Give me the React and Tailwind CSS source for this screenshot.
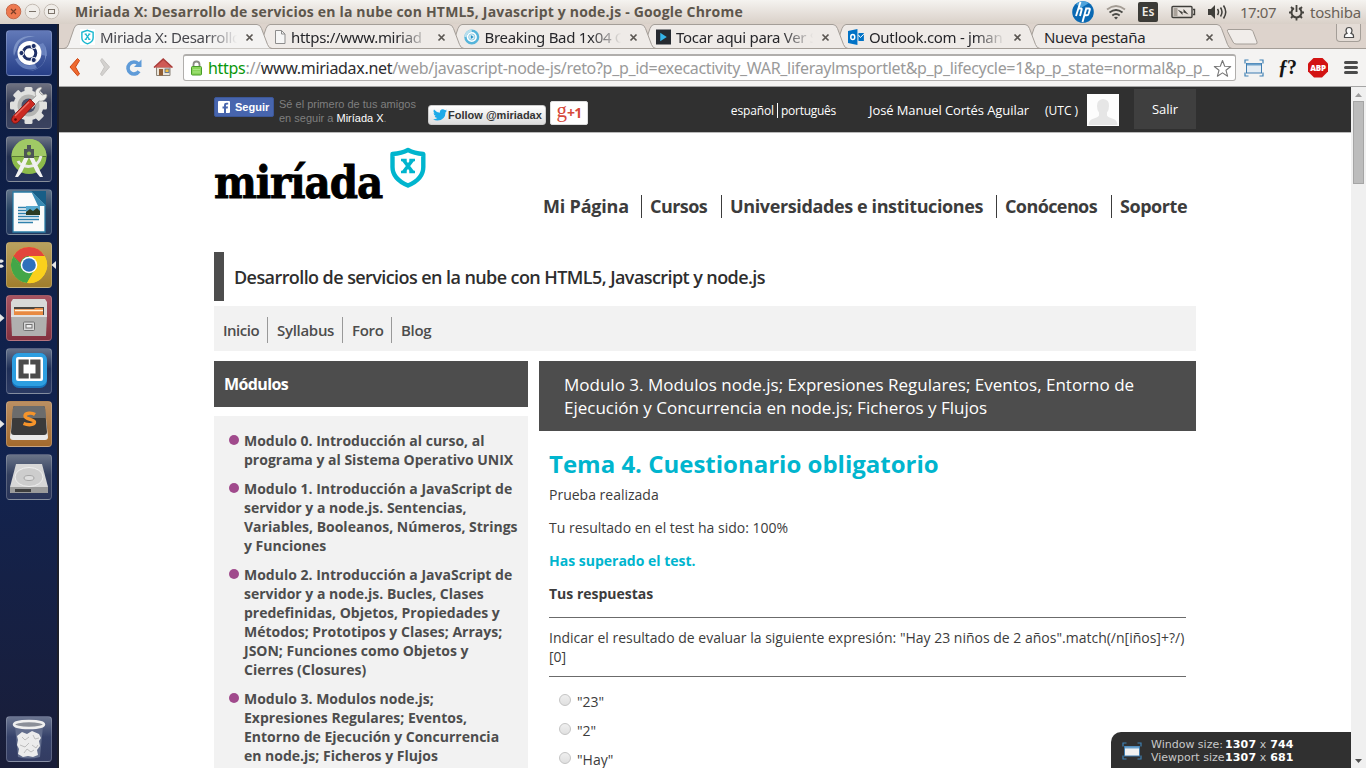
import React from "react";

/* ---------- launcher ---------- */

function Tile({ tint, left, right, children }) {
  return (
    <div className="relative flex h-[46px] w-full shrink-0 justify-center">
      {left > 0 && (
        <svg className="absolute left-0 top-[17px]" width="5" height="12" viewBox="0 0 5 12">
          {left === 1 ? (
            <path d="M0 2 L4.5 6 L0 10Z" fill="#e6e6e6" />
          ) : (
            <path d="M0 0.5h2l2 1.6-2 1.6H0ZM0 5.6h2l2 1.6-2 1.6H0Z" fill="#e6e6e6" />
          )}
        </svg>
      )}
      <div className={"h-[46px] w-[46px] overflow-hidden rounded-[4px] border border-white/20 " + tint}>
        <svg className="-ml-px -mt-px block" width="46" height="46" viewBox="0 0 46 46">
          {children}
        </svg>
      </div>
      {right && (
        <svg className="absolute right-[1px] top-[19px]" width="5" height="8" viewBox="0 0 5 8">
          <path d="M5 0 L0.5 4 L5 8Z" fill="#e6e6e6" />
        </svg>
      )}
    </div>
  );
}

function Launcher() {
  return (
    <aside className="flex w-[59px] shrink-0 flex-col items-center border-r-2 border-[#1d1f2a] bg-gradient-to-b from-[#0c1c42] via-[#12234f] via-60% to-[#191d38] pt-[6px]">
      <div className="flex w-full grow flex-col gap-[7px]">
        <Tile tint="bg-gradient-to-b from-[#6279b8] to-[#273f88]">
          <path d="M8 26C5 12 17 3 30 7c-8-1-15 2-18 8" fill="#8fa4d2" opacity=".7" />
          <path d="M39 16c5 12-3 25-17 25 9-1 15-5 17-12" fill="#8fa4d2" opacity=".7" />
          <path d="M9 29c4 9 13 13 22 9l-2-4c-7 3-13 1-17-6ZM37 13c2 2 4 7 4 13l-5-1c0-5-2-8-4-10Z" fill="#7189c4" opacity=".8" />
          <circle cx="23.5" cy="23" r="12" fill="#fff" />
          <circle cx="23.5" cy="23" r="6.300" fill="none" stroke="#1e3068" strokeWidth="3" />
          <circle cx="15.500" cy="23" r="2.600" fill="#1e3068" stroke="#fff" />
          <circle cx="27.700" cy="16" r="2.600" fill="#1e3068" stroke="#fff" />
          <circle cx="27.700" cy="30" r="2.600" fill="#1e3068" stroke="#fff" />
        </Tile>
        <Tile tint="bg-gradient-to-b from-[#6e7180] via-[#343c56] via-45% to-[#3b4360]">
          <g fill="#e0e0de">
            <circle cx="22.5" cy="22.5" r="15" />
            {[0, 45, 90, 135].map((a) => (
              <rect key={a} x="18.5" y="4" width="8" height="37" rx="1.5" transform={`rotate(${a} 22.5 22.5)`} />
            ))}
          </g>
          <circle cx="22.5" cy="22.5" r="11" fill="#b5b5b3" />
          <circle cx="22.5" cy="22.5" r="7" fill="#4a506a" />
          <path d="M22 20 30 13c-2-4 0-8 5-9l1 1-3 4 3 3 4-1 1 1c0 4-4 7-8 6l-7 8Z" fill="#ededeb" stroke="#8c8c8c" strokeWidth=".7" />
          <path d="M24 16l5 5L13 38c-2 3-6 3-7 0-1-1 0-4 2-6Z" fill="#cc2a22" stroke="#7d0f0c" strokeWidth=".8" />
          <path d="M23 19 9 33" stroke="#ef7468" strokeWidth="1.3" />
          <circle cx="9.5" cy="36.5" r="1.3" fill="#5a0907" />
        </Tile>
        <Tile tint="bg-gradient-to-b from-[#6c7484] via-[#222f50] via-45% to-[#27345a]">
          <circle cx="23" cy="20.500" r="17.500" fill="#8dbb4b" />
          <path d="M5.500 20.500a17.500 17.500 0 0 1 35 0Z" fill="#a0c965" />
          <path d="M5.500 20.500h35" stroke="#5a7a34" strokeWidth="1" />
          <path d="M12 25c3 7 20 9 23-5" fill="none" stroke="#e9e9e9" strokeWidth="3" />
          <path d="M20 18 9 41h3l4-5 8-17ZM26 18l11 23h-3l-4-5-8-17Z" fill="#f1f1f1" />
          <path d="M21 9h4v4h3v9h-10v-9h3Z" fill="#4d5557" />
          <circle cx="23" cy="17.500" r="2" fill="#8dbb4b" />
        </Tile>
        <Tile tint="bg-gradient-to-b from-[#5f7288] via-[#2a4565] via-45% to-[#24395f]">
          <path d="M7 3h20l12 12v28H7Z" fill="#fbfbfb" stroke="#2a7ca5" strokeWidth="1.300" />
          <path d="M25 2h15v15Z" fill="#175e87" />
          <path d="M25 2l15 15h-8Z" fill="#3a8bb4" />
          <path d="M12 18.500h8M12 21.500h8M12 24.500h8M12 27.500h21M12 30.500h21M12 33.500h15" stroke="#2f81ad" strokeWidth="1.600" />
          <rect x="20" y="17" width="14" height="9" fill="#57a9cf" />
          <path d="M20 26v-3l4-3 3 2 4-3 3 3v4Z" fill="#2b3b23" />
        </Tile>
        <Tile tint="bg-gradient-to-b from-[#b9a15f] to-[#a17e2c]" left={2} right>
          <circle cx="23" cy="23" r="18" fill="#f9d423" />
          <path d="M7.400 14A18 18 0 0 0 21 41l8-14-6-4-8 3Z" fill="#43a648" />
          <path d="M38.600 14H23v4l6 9-8 14a18 18 0 0 0 17.600-27Z" fill="#fad01c" />
          <path d="M7.400 14 15 27l8-8V14Z" fill="#43a648" />
          <path d="M7.400 14A18 18 0 0 1 38.600 14H23a9 9 0 0 0-8.700 7Z" fill="#e2453c" />
          <circle cx="23" cy="23" r="8.300" fill="#fff" />
          <circle cx="23" cy="23" r="6.800" fill="#2e70bb" />
        </Tile>
        <Tile tint="bg-gradient-to-b from-[#a75361] to-[#83313f]" left={1}>
          <path d="M7 4h32l2 3v13H5V7Z" fill="#d9d9d8" />
          <path d="M8 12h30v10H8Z" fill="#4a4541" />
          <path d="M8 14h20l1-1h8v8H8Z" fill="#e88a42" />
          <path d="M9 15.500h28" stroke="#fff3de" strokeWidth="1.500" />
          <path d="M5 20h36l-1 21H6Z" fill="#b0b0af" />
          <path d="M5 20h36v2H5Z" fill="#e2e2e2" />
          <rect x="17.500" y="27" width="11" height="8.500" rx="1" fill="#d9d9d9" stroke="#717171" />
          <rect x="20" y="29.500" width="6" height="3.500" fill="#efefef" stroke="#717171" />
        </Tile>
        <Tile tint="bg-gradient-to-b from-[#66728a] via-[#1f2f57] via-45% to-[#2b3a63]">
          <rect x="6" y="5" width="35" height="35" rx="7" fill="#1674bd" />
          <rect x="6" y="5" width="35" height="33" rx="7" fill="#2d9ee0" />
          <rect x="10" y="9" width="27" height="24" rx="2" fill="#fff" />
          <rect x="12.500" y="11.500" width="22" height="19" fill="#4b4b4b" />
          <path d="M23.500 11v20" stroke="#fff" strokeWidth="1.500" />
          <rect x="17.500" y="16.500" width="12" height="9" fill="#fff" />
        </Tile>
        <Tile tint="bg-gradient-to-b from-[#bb8f62] to-[#a36a2d]" left={1}>
          <path d="M7 9 4 36q0 3 3 3h32q3 0 3-3L39 9Z" fill="#e9e9e9" />
          <path d="M9 5h28q2 0 2 2l2 24q0 3-3 3H8q-3 0-3-3L7 7q0-2 2-2Z" fill="#3b3b3b" />
          <path d="M9 5h28q2 0 2 2l1 10H6L7 7q0-2 2-2Z" fill="#6c6c6c" />
          <path d="M29 13.500c-3-2-10-2-10 1.500s9.500 3 9.500 6-6 3.500-11 1.500" fill="none" stroke="#f6942a" strokeWidth="3.400" />
        </Tile>
        <Tile tint="bg-gradient-to-b from-[#6a7488] via-[#34405f] via-45% to-[#2a3559]">
          <path d="M10 10h26l6 23v5q0 1-1 1H5q-1 0-1-1v-5Z" fill="#d7d7d7" />
          <ellipse cx="23" cy="23" rx="14" ry="9.500" fill="#cdcdcd" stroke="#efefef" />
          <ellipse cx="23" cy="24" rx="5" ry="2.500" fill="#dedede" stroke="#a6a6a6" />
          <path d="M4 33h38v5q0 1-1 1H5q-1 0-1-1Z" fill="#9b9b9b" />
          <path d="M9 35h16v3H9Z" fill="#3e3e3e" />
        </Tile>
      </div>
      <div className="flex h-[52px] w-full items-start">
        <Tile tint="bg-gradient-to-b from-[#6b7590] via-[#36426a] via-45% to-[#333c62]">
          <path d="M9 10h28l-3 31q-11 3-22 0Z" fill="#626d8c" />
          <path d="M11 20l5-4 5 2 5-3 7 3 2 4-2 3 1 5-3 4 1 5-5 2-5-1-5 1-5-3 1-5-2-4 1-5Z" fill="#ececec" />
          <path d="M16 21l3 3 4-3M27 19l2 4 4-1M14 29l5 2 4-4M26 29l4 3 2-3M18 37l3-4 4 3 3-2" stroke="#bdbdbd" fill="none" />
          <ellipse cx="23" cy="8.500" rx="15" ry="3.500" fill="#8b8f98" stroke="#efefef" strokeWidth="2.500" />
        </Tile>
      </div>
    </aside>
  );
}

/* ---------- desktop panel ---------- */

function Panel() {
  return (
    <header className="flex h-6 shrink-0 items-center bg-gradient-to-b from-[#f5f3f0] to-[#d9d0c8] pl-[6px] pr-[5px] font-['Noto_Sans','Open_Sans',sans-serif] text-[15px] text-[#6a6258]">
      <svg width="55" height="24" viewBox="0 0 55 24">
        <circle cx="7.500" cy="11.500" r="7.300" fill="#ee7950" stroke="#c5694a" />
        <path d="m5 9 5 5m0-5-5 5" stroke="#793d27" strokeWidth="1.200" />
        <circle cx="26.500" cy="11.500" r="7.300" fill="#f0ede9" stroke="#c3bbb3" />
        <path d="M23 11.500h7" stroke="#7b736a" />
        <circle cx="45.500" cy="11.500" r="7.300" fill="#f0ede9" stroke="#c3bbb3" />
        <rect x="42.500" y="9.500" width="6" height="4" fill="none" stroke="#7b736a" />
      </svg>
      <h1 className="ml-[14px] grow whitespace-nowrap font-['Open_Sans',sans-serif] text-sm leading-6 font-bold tracking-[0.19px] text-[#5d564c]">
        Miriada X: Desarrollo de servicios en la nube con HTML5, Javascript y node.js - Google Chrome
      </h1>
      <svg width="22" height="22" viewBox="0 0 22 22" className="mr-[12px]">
        <circle cx="11" cy="11" r="10.800" fill="#0a69b3" />
        <path d="M4 3a11 11 0 0 1 13-1L9 7Z" fill="#4fa4dc" />
        <g fill="none" stroke="#fff" strokeWidth="1.900">
          <path d="M8.500 1 4 15M6.500 7.500h2.500q1 0 .7 1L8 15" />
          <path d="M14.500 6.500 10.500 21M14 7.500h3q1.200 0 .8 1.200L16.500 13q-.4 1.200-1.500 1.200h-2.500" />
        </g>
      </svg>
      <svg width="20" height="16" viewBox="0 0 20 16" className="mr-[12px]" fill="none" stroke="#4a4a46" strokeWidth="1.800">
        <path d="M1 5.500q9-7 18 0" stroke="#a39c94" />
        <path d="M3.500 8.500q6.500-5 13 0" />
        <path d="M6.300 11.500q3.700-3 7.400 0" />
        <path d="M8 13.500q2-1.500 4 0l-2 2Z" fill="#4a4a46" stroke="none" />
      </svg>
      <span className="mr-[13px] flex h-5 w-5 items-center justify-center rounded-[2px] bg-[#3c3b37] text-[12px] leading-none font-semibold text-[#f0ece6]">Es</span>
      <svg width="25" height="14" viewBox="0 0 25 14" className="mr-[11px]" fill="none" stroke="#3f3e3a" strokeWidth="1.400">
        <rect x="1" y="1.500" width="20" height="11" rx="1" />
        <path d="M22 4.500h1.500v5H22" />
        <path d="M2.500 3h4v8h-4Z" fill="#aaa39b" stroke="none" />
        <path d="m6.500 4.500 6 3V4l5 5.500-6-2.500v3Z" fill="#3f3e3a" stroke="none" />
      </svg>
      <svg width="21" height="16" viewBox="0 0 21 16" className="mr-[12px]" fill="none" stroke="#3f3e3a" strokeWidth="1.500">
        <path d="M1 5h3l4-4v14l-4-4H1Z" fill="#3f3e3a" stroke="none" />
        <path d="M10.500 5q2 3 0 6M13.500 3.500q3 4.500 0 9M16.500 1.500q4.500 6.500 0 13" />
      </svg>
      <span className="mr-[12px] w-[36px] whitespace-nowrap leading-6 tracking-[-0.47px]">17:07</span>
      <svg width="17" height="17" viewBox="0 0 17 17" className="mr-[5px]" fill="none" stroke="#45433e" strokeWidth="2">
        <path d="M6 4.200a5 5 0 1 0 5 0" />
        <path d="M8.500 1v7M1 8.500h2.500M13.500 8.500H16M3 3l2 2M14 3l-2 2M3 14l2-2M14 14l-2-2M8.500 14v2.500" strokeWidth="1.800" />
      </svg>
      <span className="w-[51px] whitespace-nowrap leading-6 tracking-[-0.21px]">toshiba</span>
    </header>
  );
}

/* ---------- tabs ---------- */

const Shield = () => (
  <svg width="16" height="16" viewBox="0 0 16 16" className="bg-white">
    <path d="M8 .9 14 3v6q0 4-6 6.300Q2 13 2 9V3Z" fill="#fff" stroke="#18b7cf" strokeWidth="1.500" />
    <path d="M5 5h2.200M8.800 5H11M5 10.500h2.200M8.800 10.500H11M6 5l4 5.500M10 5l-4 5.500" stroke="#18b7cf" strokeWidth="1.300" />
  </svg>
);

const PageIcon = () => (
  <svg width="12" height="16" viewBox="0 0 12 16" className="ml-[2px]">
    <path d="M1.500 1.500h6l3.500 3.500v9.500h-9.500Z" fill="#f6f6f6" stroke="#8d8d8d" />
    <path d="M7.500 1.500V5H11" fill="none" stroke="#8d8d8d" />
  </svg>
);

const DiscIcon = () => (
  <svg width="16" height="16" viewBox="0 0 16 16">
    <circle cx="8" cy="8" r="6.500" fill="#fff" stroke="#55b4da" strokeWidth="2.500" />
    <path d="M8 1.500A6.500 6.500 0 0 0 1.500 8" fill="none" stroke="#b8dfee" strokeWidth="2.500" />
    <circle cx="8" cy="8" r="3.200" fill="#dff0f7" stroke="#8dcbe4" />
    <path d="m7 6 3 2-3 2Z" fill="#2a93c5" />
  </svg>
);

const PlayIcon = () => (
  <svg width="16" height="16" viewBox="0 0 16 16">
    <rect width="16" height="16" fill="#262a30" />
    <path d="m4.500 3.500 7 4.500-7 4.500Z" fill="#35b4e8" />
  </svg>
);

const OutlookIcon = () => (
  <svg width="16" height="16" viewBox="0 0 16 16">
    <path d="M0 2 9.500 0v16L0 14Z" fill="#0072c6" />
    <ellipse cx="4.800" cy="8" rx="2" ry="2.600" fill="none" stroke="#fff" strokeWidth="1.500" />
    <path d="M10.500 4H16v8h-5.500Z" fill="#0072c6" />
    <path d="m10.500 6 2 2.500L16 5" stroke="#fff" fill="none" />
  </svg>
);

function Tab({ active, icon, title, z }) {
  return (
    <div className={"relative h-[25px] w-[192px] shrink-0 " + z}>
      <svg className="absolute left-0 top-0" width="208" height="25" viewBox="0 0 208 25">
        <path
          d="M0 24.500q3 0 4.500-4L10 4.500Q11.500.5 14 .5h179q3 0 4.500 4l6 16q1.500 4 4.500 4Z"
          fill={active ? "#f4f3f2" : "#efebe8"}
        />
        <path
          d={
            active
              ? "M0 24.500q3 0 4.500-4L10 4.500Q11.500.5 14 .5h179q3 0 4.500 4l6 16q1.500 4 4.500 4"
              : "M0 24.500q3 0 4.500-4L10 4.500Q11.500.5 14 .5h179q3 0 4.500 4l6 16q1.500 4 4.500 4Z"
          }
          fill="none"
          stroke="#a49e98"
        />
      </svg>
      <div className="relative flex h-full items-center gap-[5px] pl-[16px]">
        {icon}
        <span
          className={
            "w-[140px] grow whitespace-nowrap text-[15px] leading-[24px] tracking-[-0.3px] " +
            (active ? "text-[#47474d] " : "text-[#26262a] ") +
            (icon ? "[mask-image:linear-gradient(to_right,black_76%,transparent_98%)]" : "")
          }
        >
          {title}
        </span>
        <svg width="9" height="9" viewBox="0 0 9 9" className="mr-[2px] mt-[2px] shrink-0">
          <path d="m1.500 1.500 6 6m0-6-6 6" stroke="#5a5652" strokeWidth="1.700" />
        </svg>
      </div>
    </div>
  );
}

function TabStrip() {
  return (
    <div className="relative flex h-[25px] shrink-0 bg-[#ddd3cc] pl-[5px] font-['Noto_Sans','Open_Sans',sans-serif]">
      <div className="absolute bottom-0 left-0 h-px w-full bg-[#a49e98]" />
      <Tab active z="z-[7]" icon={<Shield />} title="Miriada X: Desarrollo" />
      <Tab z="z-[6]" icon={<PageIcon />} title="https://www.miriad" />
      <Tab z="z-[5]" icon={<DiscIcon />} title="Breaking Bad 1x04 C" />
      <Tab z="z-[4]" icon={<PlayIcon />} title="Tocar aqui para Ver S" />
      <Tab z="z-[3]" icon={<OutlookIcon />} title="Outlook.com - jman" />
      <Tab z="z-[2]" title={<span className="pl-[4px]">Nueva pestaña</span>} />
      <svg width="34" height="25" viewBox="0 0 34 25" className="ml-[9px]">
        <path d="M3 5.500h22q2 0 3 2l4 10.500q.8 2-1.500 2H11q-2 0-3-2L2.500 7.500Q2 5.500 3 5.500Z" fill="#f1edea" stroke="#a49e98" />
      </svg>
      <div className="ml-auto mr-[5px] h-[18px] w-[25px] self-start rounded-b-[4px] border border-t-0 border-[#a49e98] bg-[#e4dcd6] pl-[5px] pt-[2px]">
        <svg width="14" height="13" viewBox="0 0 14 13" fill="#fbfafa" stroke="#4b4b4b" strokeWidth="1.200">
          <path d="M2.500 11.500v-1.500q0-2 2.500-2.600Q4 6 4 4.400 4.200 1.500 7 1.500t3 2.900Q10 6 9 7.400q2.500.6 2.500 2.600v1.500Z" />
        </svg>
      </div>
    </div>
  );
}

/* ---------- toolbar ---------- */

const ViewportIcon = ({ fill }) => (
  <svg width="20" height="18" viewBox="0 0 20 18" className="shrink-0">
    <path d="M1 4.500V1h3.500M15.500 1H19v3.500M19 13.500V17h-3.500M4.500 17H1v-3.500" fill="none" stroke="#3f82b5" strokeWidth="1.200" />
    <rect x="2.500" y="4.500" width="15" height="9.500" fill={fill} stroke="#3f7db0" />
    <path d="M3 4.500h14v2H3Z" fill="#6ba0ca" />
  </svg>
);

function Toolbar() {
  return (
    <div className="flex h-[38px] shrink-0 items-start border-b border-[#a5a5a5] bg-[#f4f3f2] pt-[5px]">
      <svg width="118" height="27" viewBox="0 0 118 27" className="ml-[6px]">
        <path d="m5 13 7.500-8.500 2 2L10.500 13l4 7-2 1.800Z" fill="#ee6a30" stroke="#cf4513" />
        <path d="m44.500 13-7.500-8.500-1.500 2L39.500 13l-4 7 1.500 1.800Z" fill="#d3d1cf" stroke="#c6c4c2" />
        <path d="M74 17.300a6 6 0 1 1-.8-7.600" fill="none" stroke="#5f9bd8" strokeWidth="3.600" />
        <path d="M76.500 5.500v7.500h-7.500Z" fill="#5f9bd8" />
        <path d="M91.500 13h13.500v8.500H91.500Z" fill="#e9e3d8" stroke="#8a8276" />
        <path d="m89 13.500 9.200-8.500 9.300 8.500" fill="#cf5a55" stroke="#a93c3a" strokeWidth="1.500" />
        <rect x="94" y="15" width="4" height="6.500" fill="#8f5c33" />
        <rect x="100" y="15" width="4" height="3.500" fill="#f4bf40" stroke="#4a6791" strokeWidth=".8" />
      </svg>
      <div className="flex h-[27px] w-[1053px] shrink-0 items-center rounded-[3px] border border-t-2 border-[#b0aeac] bg-white pl-[6px] pr-[3px] font-['Noto_Sans','Open_Sans',sans-serif]">
        <svg width="13" height="16" viewBox="0 0 13 16" className="mr-[5px]">
          <path d="M3.500 7V4.500a3 3 0 0 1 6 0V7" fill="none" stroke="#8b8b86" strokeWidth="1.800" />
          <rect x="1.500" y="6.500" width="10" height="8.500" rx="1" fill="#8ad55a" stroke="#489c28" />
          <path d="M3 9.500h7M3 12h7" stroke="#a8e683" />
        </svg>
        <p className="grow whitespace-nowrap text-[16px] leading-[24px] tracking-[-0.31px] text-[#9a9a9a]">
          <span className="text-[#0a970a]">https</span>://<span className="text-[#2d2d30]">www.miriadax.net</span>/web/javascript-node-js/reto?p_p_id=execactivity_WAR_liferaylmsportlet&amp;p_p_lifecycle=1&amp;p_p_state=normal&amp;p_p_
        </p>
        <svg width="19" height="19" viewBox="0 0 19 19">
          <path d="m9.500 1.500 2.200 5.700 6 .3-4.700 3.800 1.600 5.900-5.100-3.300-5.100 3.300L6 11.300 1.300 7.500l6-.3Z" fill="#fff" stroke="#777" strokeWidth="1.100" strokeLinejoin="round" />
        </svg>
      </div>
      <div className="flex h-[27px] grow items-center pl-[8px]">
        <ViewportIcon fill="#e4ecf3" />
        <span className="ml-[14px] w-[18px] -translate-y-px whitespace-nowrap font-['Liberation_Serif',serif] text-[20px] leading-[24px] font-bold tracking-[-1px] text-[#141414]"><i>ƒ</i>?</span>
        <span className="ml-[12px] flex h-[20px] w-[20px] items-center justify-center bg-[#d21313] font-['Open_Sans',sans-serif] text-[8px] font-extrabold tracking-[-0.3px] text-white [clip-path:polygon(30%_0,70%_0,100%_30%,100%_70%,70%_100%,30%_100%,0_70%,0_30%)]">
          ABP
        </span>
        <svg width="14" height="15" viewBox="0 0 14 15" className="ml-[16px]">
          <path d="M1.500 2.500h11M1.500 7.500h11M1.500 12.500h11" stroke="#4b4b4b" strokeWidth="3" strokeLinecap="round" />
        </svg>
      </div>
    </div>
  );
}

/* ---------- page ---------- */

function TopBar() {
  return (
    <div className="h-[46px] border-b border-[#b9b9b9] bg-[#303030] text-white">
      <div className="ml-[155px] flex h-[45px] w-[982px] items-start">
        <div className="mt-[10px] flex h-5 w-[60px] items-center rounded-[2px] border border-[#3c5798] bg-[#4765ae] pl-[3px] font-['Liberation_Sans',Arial,sans-serif] text-[11px] font-bold">
          <svg width="12" height="12" viewBox="0 0 12 12" className="mr-[5px]">
            <rect width="12" height="12" rx="1" fill="#fff" />
            <path d="M8 12V7.500h1.700l.3-2H8V4.300q0-.8 1-.8h1.200V1.700H8.400Q6 1.700 6 4v1.500H4.500v2H6V12Z" fill="#4765ae" />
          </svg>
          Seguir
        </div>
        <p className="ml-[5px] mt-[10px] w-[150px] whitespace-nowrap font-['Liberation_Sans',Arial,sans-serif] text-[11px] leading-[14px] text-[#7f7f7f]">
          Sé el primero de tus amigos
          <br />
          en seguir a <span className="text-white">Miríada X</span>.
        </p>
        <div className="-ml-px mt-[18px] flex h-5 w-[118px] items-center whitespace-nowrap rounded-[3px] border border-[#ccc] bg-gradient-to-b from-white to-[#dedede] pl-[4px] font-['Liberation_Sans',Arial,sans-serif] text-[11px] font-bold text-[#333]">
          <svg width="14" height="12" viewBox="0 0 14 12" className="mr-[1px] shrink-0">
            <path d="M14 1.400q-.7.400-1.600.5Q13.300 1.300 13.600.4q-.8.500-1.800.7A2.900 2.900 0 0 0 6.900 3.700Q3.300 3.500 1 .6q-1.400 2.400.9 3.900-.700 0-1.300-.4 0 2.300 2.300 2.900-.6.200-1.300 0 .6 1.900 2.700 2Q2.500 10.500 0 10.200 2 11.500 4.400 11.500q7.800-.3 8.200-8.300Q13.400 2.500 14 1.400Z" fill="#1eaae8" />
          </svg>
          Follow @miriadax
        </div>
        <div className="ml-[4px] mt-[14px] flex h-6 w-[38px] items-center justify-center rounded-[2px] border border-[#ddd] bg-white text-[#d6493a]">
          <span className="-mt-[5px] font-['Liberation_Serif',serif] text-[21px] leading-none">g</span>
          <span className="font-['Open_Sans',sans-serif] text-[14px] leading-none font-bold tracking-[-0.8px]">+1</span>
        </div>
        <div className="ml-auto flex h-full items-start whitespace-nowrap font-['Open_Sans',sans-serif]">
          <span className="mt-[15px] text-[12px] leading-[17px] tracking-[-0.12px]">español</span>
          <span className="ml-[3px] mt-[16px] h-[15px] w-px bg-white" />
          <span className="ml-[3px] mt-[15px] w-[55px] text-[12px] leading-[17px] tracking-[-0.27px]">português</span>
          <span className="ml-[33px] mt-[14px] w-[160px] text-[13px] leading-[18px] tracking-[-0.084px]">José Manuel Cortés Aguilar</span>
          <span className="ml-[16px] mt-[15px] w-[33px] text-[12px] leading-[17px]">(UTC )</span>
          <svg width="32" height="32" viewBox="0 0 32 32" className="ml-[9px] mt-[7px] bg-[#fdfdfd]">
            <path d="M1.500 31q.5-5 4-6 6-2 6.500-3.500v-3Q10 16 10 12q0-6.500 6-7 6.500.5 6 7 0 4-2 6.500v3Q20.500 23 26.500 25q3.500 1 4 6Z" fill="#e6e6e6" />
          </svg>
          <span className="ml-[15px] mt-[2px] flex h-10 w-[62px] items-center justify-center bg-[#3f3f3f] pt-px text-[13px]">Salir</span>
        </div>
      </div>
    </div>
  );
}

function Brand() {
  return (
    <div className="flex h-[119px] items-start justify-between">
      <div className="flex">
        <span className="mt-[20px] block h-[60px] w-[176px] whitespace-nowrap font-['DejaVu_Serif_Condensed','DejaVu_Serif',serif] text-[45px] leading-[60px] font-bold tracking-[-1.1px] text-black [-webkit-text-stroke:0.8px_black]">
          miríada
        </span>
        <svg width="36" height="41" viewBox="0 0 36 41" className="mt-[14px]">
          <path d="M18 3q6 3.300 15.300 4V20q0 12-15.300 18.500Q2.500 32 2.500 20V7q9.500-.7 15.500-4Z" fill="#fff" stroke="#00b5ce" strokeWidth="4.400" strokeLinejoin="round" />
          <path d="M11 13h5.700M19.300 13H25M11 25h5.700M19.300 25H25" stroke="#00b5ce" strokeWidth="2.600" />
          <path d="m13.500 13 9 12M22.500 13l-9 12" stroke="#00b5ce" strokeWidth="3.600" />
        </svg>
      </div>
      <nav className="mr-2 mt-[62px] flex whitespace-nowrap font-['Open_Sans',sans-serif] text-[18px] leading-[23px] font-bold text-[#3c3c3c]">
        <span className="w-[98px] tracking-[-0.2px]">Mi Página</span>
        <span className="w-[80px] border-l border-[#3c3c3c] pl-[8px] tracking-[-0.55px]">Cursos</span>
        <span className="w-[275px] border-l border-[#3c3c3c] pl-[8px] tracking-[-0.38px]">Universidades e instituciones</span>
        <span className="w-[115px] border-l border-[#3c3c3c] pl-[8px] tracking-[-0.6px]">Conócenos</span>
        <span className="w-[77px] border-l border-[#3c3c3c] pl-[8px] tracking-[-0.45px]">Soporte</span>
      </nav>
    </div>
  );
}

function Modules() {
  const items = [
    ["Modulo 0. Introducción al curso, al", "programa y al Sistema Operativo UNIX"],
    ["Modulo 1. Introducción a JavaScript de", "servidor y a node.js. Sentencias,", "Variables, Booleanos, Números, Strings", "y Funciones"],
    ["Modulo 2. Introducción a JavaScript de", "servidor y a node.js. Bucles, Clases", "predefinidas, Objetos, Propiedades y", "Métodos; Prototipos y Clases; Arrays;", "JSON; Funciones como Objetos y", "Cierres (Closures)"],
    ["Modulo 3. Modulos node.js;", "Expresiones Regulares; Eventos,", "Entorno de Ejecución y Concurrencia", "en node.js; Ficheros y Flujos"],
  ];
  return (
    <div className="flex w-[314px] shrink-0 flex-col gap-[9px]">
      <h3 className="h-[46px] bg-[#4d4d4d] pl-[10px] text-[16px] leading-[46px] font-bold tracking-[-0.6px] text-white">Módulos</h3>
      <ul className="flex h-[400px] flex-col gap-[10px] bg-[#f2f2f2] pl-[15px] pt-[15px] text-sm leading-[19px] font-bold text-[#4d4d4d]">
        {items.map((lines) => (
          <li key={lines[0]} className="flex gap-[5px]">
            <span className="mt-[4px] h-[10px] w-[10px] shrink-0 rounded-full bg-[#a04a8c]" />
            <span className="whitespace-nowrap">
              {lines.map((l) => (
                <span key={l} className="block">{l}</span>
              ))}
            </span>
          </li>
        ))}
      </ul>
    </div>
  );
}

function Quiz() {
  return (
    <div className="w-[657px] shrink-0 text-sm leading-[19px] text-[#3c3c3c]">
      <h2 className="h-[70px] whitespace-nowrap bg-[#4d4d4d] pl-[25px] pt-[12px] text-[17px] leading-[23px] text-white">
        Modulo 3. Modulos node.js; Expresiones Regulares; Eventos, Entorno de
        <br />
        Ejecución y Concurrencia en node.js; Ficheros y Flujos
      </h2>
      <div className="flex w-[647px] flex-col whitespace-nowrap pl-[10px]">
        <h1 className="mt-[16px] text-[24px] leading-[33px] font-bold text-[#00b5ce]">Tema 4. Cuestionario obligatorio</h1>
        <p className="mt-[5px]">Prueba realizada</p>
        <p className="mt-[14px]">Tu resultado en el test ha sido: 100%</p>
        <p className="mt-[14px] font-bold text-[#00b5ce]">Has superado el test.</p>
        <p className="mt-[14px] font-bold">Tus respuestas</p>
        <div className="mt-[14px] h-[60px] border-y border-[#6b6b6b] pt-[10px]">
          Indicar el resultado de evaluar la siguiente expresión: "Hay 23 niños de 2 años".match(/n[iños]+?/)
          <br />
          [0]
        </div>
        <div className="mt-[15px] flex flex-col gap-[10px] pl-[10px]">
          {['"23"', '"2"', '"Hay"'].map((o) => (
            <label key={o} className="flex items-start gap-[6px]">
              <span className="mt-[2px] h-[12px] w-[12px] rounded-full border border-[#c4c4c4] bg-gradient-to-b from-[#efefef] to-[#e0e0e0]" />
              {o}
            </label>
          ))}
        </div>
      </div>
    </div>
  );
}

function Scrollbar() {
  return (
    <div className="flex w-[15px] shrink-0 flex-col items-center bg-[#f0f0f0]">
      <svg width="15" height="14" viewBox="0 0 15 14"><path d="m4 10 3.500-4L11 10Z" fill="#9c9c9c" /></svg>
      <div className="h-[83px] w-[11px] grow-0 border border-[#a5a5a5] bg-[#bcbcbc]" />
      <svg width="15" height="14" viewBox="0 0 15 14" className="mt-auto"><path d="m4 5 3.500 4L11 5Z" fill="#505050" /></svg>
    </div>
  );
}

export default function App() {
  return (
    <div className="relative flex h-[768px] w-[1366px] flex-col overflow-hidden bg-white">
      <Panel />
      <div className="flex h-[744px]">
        <Launcher />
        <div className="flex w-[1307px] flex-col">
          <TabStrip />
          <Toolbar />
          <div className="flex h-[681px]">
            <main className="w-[1292px] overflow-hidden bg-white font-['Open_Sans',sans-serif]">
              <TopBar />
              <div className="ml-[155px] w-[982px]">
                <Brand />
                <h2 className="h-[49px] whitespace-nowrap border-l-[10px] border-[#4d4d4d] pl-[10px] text-[18px] leading-[50px] font-semibold tracking-[-0.58px] text-[#2e2e2e]">
                  Desarrollo de servicios en la nube con HTML5, Javascript y node.js
                </h2>
                <nav className="mt-[5px] flex h-[45px] items-center whitespace-nowrap bg-[#f2f2f2] pt-[2px] text-[15px] leading-[26px] font-semibold text-[#4d4d4d]">
                  <span className="w-[53px] pl-[9px] tracking-[-0.5px]">Inicio</span>
                  <span className="w-[75px] border-l border-[#999] pl-[9px] tracking-[-0.3px]">Syllabus</span>
                  <span className="w-[49px] border-l border-[#999] pl-[9px] tracking-[-0.3px]">Foro</span>
                  <span className="border-l border-[#999] pl-[9px] tracking-[-0.3px]">Blog</span>
                </nav>
                <div className="mt-[10px] flex gap-[11px]">
                  <Modules />
                  <Quiz />
                </div>
              </div>
            </main>
            <Scrollbar />
          </div>
        </div>
      </div>
      <div className="absolute bottom-0 right-[15px] flex h-9 w-[240px] items-center rounded-tl-[10px] bg-[#303030] pl-[11px] pt-px font-['DejaVu_Sans',sans-serif] text-[11px] leading-[13px] text-[#c9c9c9]">
        <ViewportIcon fill="#f1f1f1" />
        <div className="ml-[9px] grid grid-cols-[74px_auto] whitespace-nowrap">
          <span>Window size:</span>
          <span className="tracking-[0.15px]"><b className="text-white">1307</b> x <b className="text-white">744</b></span>
          <span>Viewport size</span>
          <span className="tracking-[0.15px]"><b className="text-white">1307</b> x <b className="text-white">681</b></span>
        </div>
      </div>
    </div>
  );
}
